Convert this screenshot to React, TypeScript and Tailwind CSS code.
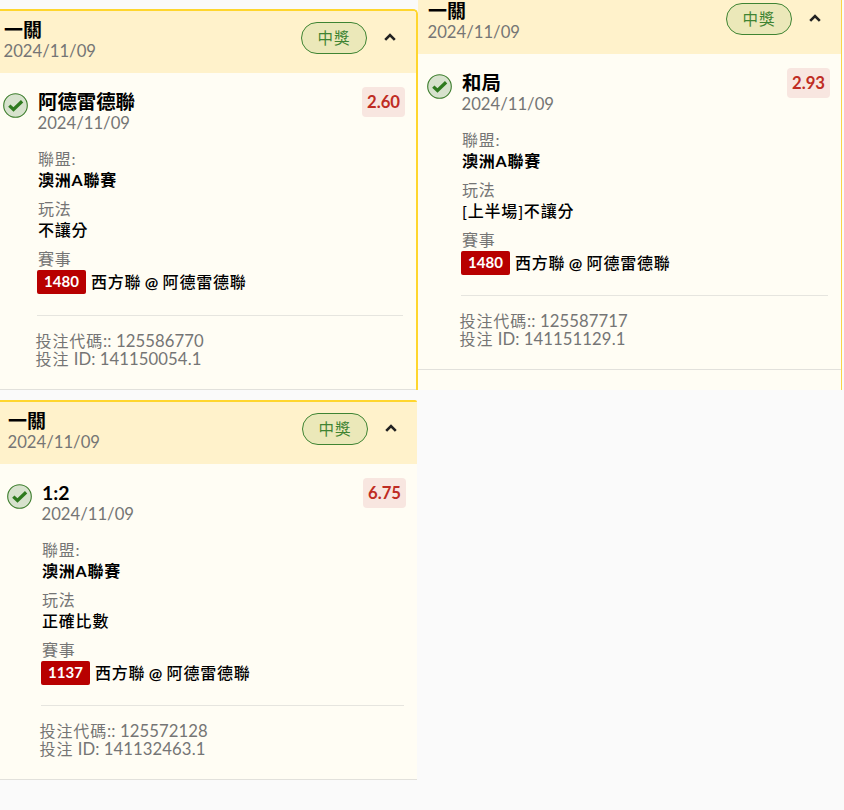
import clsx from 'clsx'

type Bet = {
    name: string
    odds: string
    play: string
    matchNo: string
    code: string
    id: string
}

const bets: Bet[] = [
    { name: '阿德雷德聯', odds: '2.60', play: '不讓分', matchNo: '1480', code: '125586770', id: '141150054.1' },
    { name: '和局', odds: '2.93', play: '[上半場]不讓分', matchNo: '1480', code: '125587717', id: '141151129.1' },
    { name: '1:2', odds: '6.75', play: '正確比數', matchNo: '1137', code: '125572128', id: '141132463.1' },
]

function WinIcon() {
    return (
        <svg className="h-[25px] w-[25px] shrink-0" viewBox="0 0 25 25" fill="none">
            <circle cx="12.5" cy="12.5" r="11.8" fill="#d7e2cd" stroke="#3c7d2c" strokeWidth="1.1" />
            <path d="M6.3 12.6l4.2 3.9 8.6-8.2" stroke="#2f7a1f" strokeWidth="3.3" />
        </svg>
    )
}

function Chevron() {
    return (
        <svg className="-mt-[3px] h-[8px] w-[12px]" viewBox="0 0 12 8" fill="none">
            <path d="M1.2 6.9L6 2.1l4.8 4.8" stroke="#222" strokeWidth="2.6" />
        </svg>
    )
}

function Field({ label, children }: { label: string; children: React.ReactNode }) {
    return (
        <div className="mb-[8px]">
            <div className="h-[21px] leading-[21px] text-[#757575]">{label}</div>
            <div className="h-[21px] leading-[21px]">{children}</div>
        </div>
    )
}

function BetCard({ bet, className }: { bet: Bet; className?: string }) {
    return (
        <div className={clsx('border-[#ffd62e] bg-[#fffdf4]', className)}>
            <div className="flex h-[62px] justify-between bg-[#fff2cb] pr-[20px] pt-[9px]">
                <div>
                    <div className="h-[21px] text-[19px] font-bold leading-[20px]">一關</div>
                    <div className="-ml-[0.5px] h-[20px] leading-[20px] text-[#757575]">2024/11/09</div>
                </div>
                <div className="mt-[2px] flex h-[32px] items-center gap-[17px]">
                    <div className="flex h-[32px] w-[66px] items-center justify-center rounded-full border border-[#3f8433] bg-[#ebe8b9] pt-px text-[15.5px] tracking-[1px] text-[#3f8433]">
                        中獎
                    </div>
                    <Chevron />
                </div>
            </div>
            <div className="flex h-[316px] border-b border-[#e2e1dc] pr-[11px] pt-[14px]">
                <div className="-ml-px mt-[6px]">
                    <WinIcon />
                </div>
                <div className="ml-[10px] flex flex-1 flex-col">
                    <div className="flex justify-between">
                        <div className="pt-[5px]">
                            <div className="h-[21px] text-[19.4px] font-bold leading-[20px]">{bet.name}</div>
                            <div className="-ml-[0.5px] h-[20px] leading-[20px] text-[#757575]">2024/11/09</div>
                        </div>
                        <div className="flex h-[30px] w-[43px] items-center justify-center rounded-[4px] bg-[#f8e6e0] pt-[2px] font-bold text-[#bf2c23]">
                            {bet.odds}
                        </div>
                    </div>
                    <div className="mt-[15px] text-[16px] tracking-[0.8px]">
                        <Field label="聯盟:">
                            <span className="font-bold">澳洲A聯賽</span>
                        </Field>
                        <Field label="玩法">
                            <span className="font-medium">{bet.play}</span>
                        </Field>
                        <div className="h-[21px] leading-[21px] text-[#757575]">賽事</div>
                        <div className="-ml-px flex h-[25px] items-center gap-[5px]">
                            <span className="flex h-[24px] w-[49px] items-center justify-center rounded-[2px] bg-[#b80000] text-[15px] font-bold tracking-normal text-white">
                                {bet.matchNo}
                            </span>
                            <span className="pt-px font-medium [word-spacing:-1.4px]">
                                西方聯 <span className="font-bold">@</span> 阿德雷德聯
                            </span>
                        </div>
                    </div>
                    <div className="-ml-px mr-[2px] mt-auto h-[74px] border-t border-[#e6e5df] pt-[16px] leading-[18px] tracking-[0.08px] text-[#757575]">
                        <div className="-ml-[1.5px] h-[18px]">
                            <span className="text-[16px] tracking-[0.9px]">投注代碼</span>:: {bet.code}
                        </div>
                        <div className="-ml-[1.5px] h-[18px]">
                            <span className="text-[16px] tracking-[0.9px]">投注</span> ID: {bet.id}
                        </div>
                    </div>
                </div>
            </div>
        </div>
    )
}

export default function App() {
    return (
        <div
            lang="zh-Hant"
            className="h-[810px] w-[844px] overflow-hidden bg-[#fafafa] font-['Lato','Noto_Sans_CJK_TC',sans-serif] text-[16.7px] text-black"
        >
            <div className="flex h-[390px]">
                <div className="h-full w-[418px] overflow-hidden pt-[9px]">
                    <BetCard bet={bets[0]} className="overflow-hidden rounded-tr-[5px] border-r-2 border-t-2 *:pl-[4px] *:last:h-[317px]" />
                </div>
                <div className="h-full w-[424px] overflow-hidden border-r border-[#f8d448] bg-[#fffdf4]">
                    <BetCard bet={bets[1]} className="-mt-[8px] *:pl-[10px]" />
                </div>
            </div>
            <div className="w-[417px] pt-[10px]">
                <BetCard bet={bets[2]} className="overflow-hidden rounded-tr-[2px] border-t-2 *:pl-[8px]" />
            </div>
        </div>
    )
}
